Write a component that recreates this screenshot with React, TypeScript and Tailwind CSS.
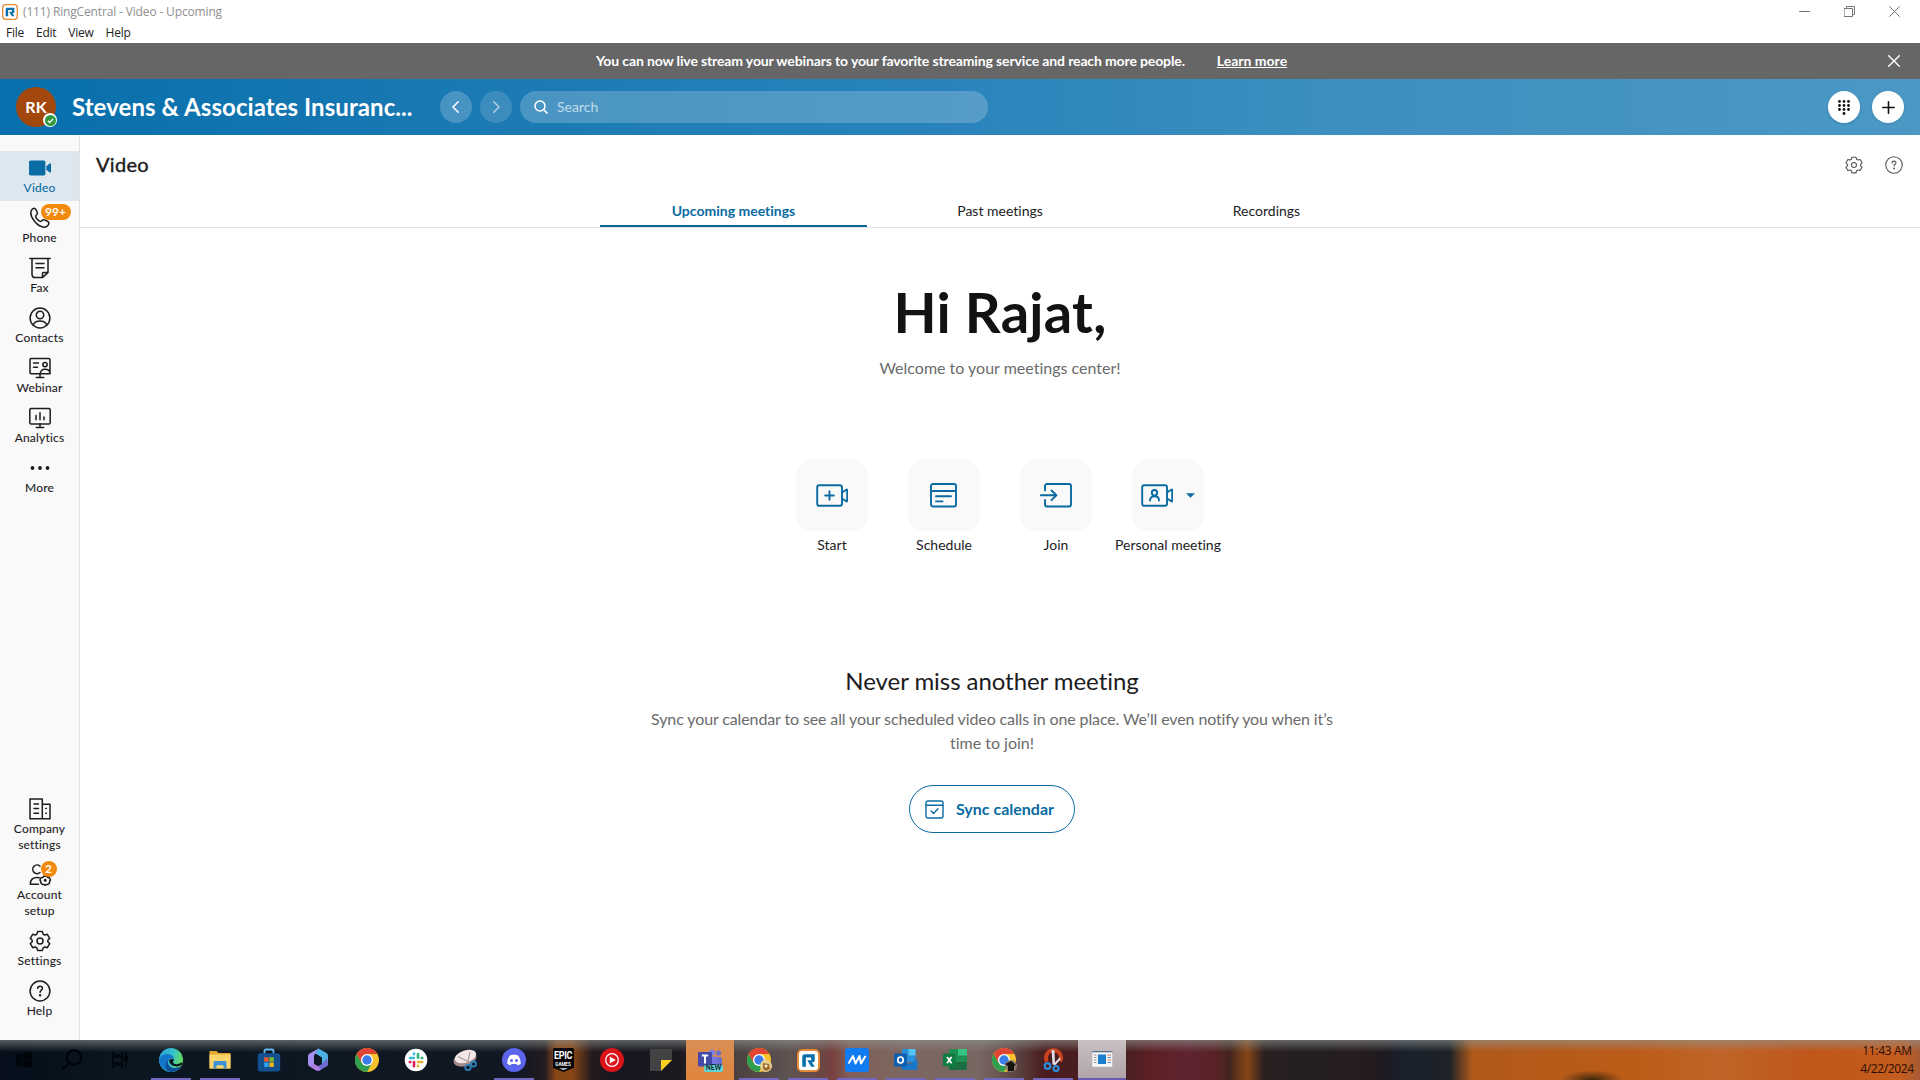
import React from 'react';

type SvgProps = { className?: string; children: React.ReactNode; box?: string; w?: number };

function Line({ className = 'size-6', children, box = '0 0 24 24', w = 1.5 }: SvgProps) {
  return (
    <svg viewBox={box} className={className} fill="none" stroke="currentColor" strokeWidth={w} strokeLinecap="round" strokeLinejoin="round">
      {children}
    </svg>
  );
}

const gearPath =
  'M9.6 2.6h4.8l.7 2.5 1.6.9 2.6-.7 2.4 4.1-1.9 1.8v1.6l1.9 1.8-2.4 4.1-2.6-.7-1.6.9-.7 2.5H9.6l-.7-2.5-1.6-.9-2.6.7-2.4-4.1 1.9-1.8v-1.6L2.3 9.4l2.4-4.1 2.6.7 1.6-.9z';

function Gear({ className = 'size-6', w = 1.5 }: { className?: string; w?: number }) {
  return (
    <Line className={className} w={w}>
      <path d={gearPath} />
      <circle cx="12" cy="12" r="3" />
    </Line>
  );
}

function Help({ className = 'size-6', w = 1.5 }: { className?: string; w?: number }) {
  return (
    <Line className={className} w={w}>
      <circle cx="12" cy="12" r="9.9" />
      <path d="M9.7 9.6c0-1.4 1-2.3 2.4-2.3s2.3.9 2.3 2.1c0 1.6-2.3 1.9-2.3 3.9" />
      <circle cx="12.1" cy="16.2" r=".5" fill="currentColor" />
    </Line>
  );
}

const VideoIcon = (
  <svg viewBox="0 0 24 24" className="size-6" fill="currentColor">
    <rect x="1" y="4.4" width="16.4" height="15" rx="1.6" />
    <path d="M18.3 10.2l3.4-2.7c.7-.5 1.3-.2 1.3.6v7.7c0 .8-.6 1.1-1.3.6l-3.4-2.7z" />
  </svg>
);

const PhoneIcon = (
  <Line>
    <path d="M3 5.2c.5-1.6 2.2-3.2 3.5-3 .9.1 1.3 1 1.8 2l1 2.3c.4 1 .1 1.7-.9 2.5-.9.8-1 1.3-.5 2.3.8 1.6 2 2.9 3.7 3.9.9.5 1.4.4 2.2-.5.8-1 1.6-1.2 2.6-.8l2.6 1.1c1.2.5 1.9 1 1.9 2 0 1.9-2 4.2-4.3 4.2C9.6 21.2 1.6 11.3 3 5.2z" />
  </Line>
);

const FaxIcon = (
  <Line>
    <path d="M1.8 2.4h20.4M4 2.4v15.8c0 2 .8 3.4 2.7 3.4h7.8l5.5-5.2v-14M14.5 21.6v-4.1c0-.7.4-1.1 1.1-1.1H20M8 7.4h8M8 11.8h8" />
  </Line>
);

const ContactsIcon = (
  <Line>
    <circle cx="12" cy="12" r="9.9" />
    <circle cx="12" cy="9" r="3.7" />
    <path d="M5.2 18.8c1.1-2.6 3.7-3.9 6.8-3.9s5.7 1.3 6.8 3.9" />
  </Line>
);

const WebinarIcon = (
  <Line>
    <path d="M11.5 17.8H3.2c-.8 0-1.2-.5-1.2-1.2V3.8c0-.8.4-1.2 1.2-1.2h17.6c.8 0 1.2.4 1.2 1.2v14H12.3c0-2.7 1.7-4.5 4.7-4.5 2.8 0 4.7 1.5 4.9 3.6M5.5 7h5M5.5 11.2h4M12 17.8v3.7M8.3 21.5h7.4" />
    <circle cx="17" cy="8.6" r="2.2" />
  </Line>
);

const AnalyticsIcon = (
  <Line>
    <rect x="1.8" y="2.6" width="20.4" height="15.4" rx="1.3" />
    <path d="M8 9.5v4.2M12 6.8v6.9M16 11v2.7M12 18v3.5M8.3 21.5h7.4" />
  </Line>
);

const MoreIcon = (
  <svg viewBox="0 0 24 24" className="size-6" fill="currentColor">
    <circle cx="4.5" cy="12" r="1.9" />
    <circle cx="12" cy="12" r="1.9" />
    <circle cx="19.5" cy="12" r="1.9" />
  </svg>
);

const CompanyIcon = (
  <Line>
    <path d="M2 21.8V2h12.3v19.8zM14.3 7.3H22v14.5h-7.7M6 7h4.5M6 11.6h4.5M6 16.2h4.5M17.8 11.6h.6M17.8 16.2h.6" />
  </Line>
);

const AccountIcon = (
  <Line>
    <path d="M12 9.5A4.3 4.3 0 1 1 12 3.2M2.3 21.2c-.1-4.5 2.6-6.7 6.5-6.7 1 0 1.7.1 2.4.3M2.3 21.2h8.2" />
    <path d="M15.7 13.2h3.2l.9 1.3 1.7.3 1 2.2-1 1.500.1 1.500-2 1.600-1.200-.2-1.200.9-1.200-.9-1.300.2-1.900-1.600.1-1.500-1-1.500 1-2.200 1.700-.3z" />
    <circle cx="17.2" cy="17.2" r=".8" />
  </Line>
);

type NavProps = { icon: React.ReactNode; label: string; active?: boolean; badge?: string; two?: boolean };

function NavItem({ icon, label, active, badge, two }: NavProps) {
  return (
    <div className={`flex w-full flex-col items-center pt-[5px] ${two ? 'h-[66px]' : 'h-[50px]'} ${active ? 'bg-[#dce7f0] text-[#0a6ca4]' : 'text-[#1c1c1e]'}`}>
      <div className="relative">
        {icon}
        {badge && (
          <span className={`absolute -top-[2px] flex h-4 items-center justify-center rounded-full bg-[#f18a0c] text-[12px] font-bold text-white ${badge.length > 1 ? 'left-[13px] w-[30px]' : 'left-[13px] w-4'}`}>
            {badge}
          </span>
        )}
      </div>
      <span className="w-[66px] text-center text-[12px] leading-4 tracking-[0.2px] [-webkit-text-stroke:0.1px]">{label}</span>
    </div>
  );
}

function RingLogo({ className }: { className: string }) {
  return (
    <svg viewBox="0 0 24 24" className={className}>
      <rect x="1" y="1" width="22" height="22" rx="4.5" fill="#fff" stroke="#e58a35" strokeWidth="2" />
      <path d="M5.5 18.5V8.2c0-1.7 1-2.7 2.7-2.7h10.3v6.3c0 1.3-.7 2-2 2h-1l3.2 4.7h-4l-4-6.8h4.1V8.9H9.3v9.6z" fill="#0b6fa8" />
    </svg>
  );
}

function Chrome() {
  return (
    <svg viewBox="0 0 24 24" className="size-6">
      <circle cx="12" cy="12" r="12" fill="#f8c32a" />
      <path d="M1.6 6A12 12 0 0 0 12 24l5.2-9L12 12 6.8 15z" fill="#2f9e4f" />
      <path d="M12 6h10.4A12 12 0 0 0 1.6 6l5.2 9z" fill="#e04434" />
      <circle cx="12" cy="12" r="6" fill="#fff" />
      <circle cx="12" cy="12" r="4.7" fill="#3b7de8" />
    </svg>
  );
}

function ChromeProfile({ dark }: { dark?: boolean }) {
  return (
    <div className="relative">
      <Chrome />
      <svg viewBox="0 0 12 12" className="absolute -right-px bottom-0 size-3">
        {dark ? (
          <>
            <circle cx="6" cy="6" r="6" fill="#8b7a6a" />
            <path d="M0 4l6-3 5 4-2 1v5H3V6z" fill="#16130f" />
          </>
        ) : (
          <>
            <circle cx="6" cy="6" r="6" fill="#e6cf8d" />
            <path d="M3 3l6 1 1 5-4 2-3-2z" fill="#9b6a2c" />
            <circle cx="6" cy="6" r="1.5" fill="#fff5d8" />
          </>
        )}
      </svg>
    </div>
  );
}

const Edge = (
  <svg viewBox="0 0 24 24" className="size-6">
    <defs>
      <linearGradient id="edgeTop" x1="0" y1="0" x2="1" y2=".3">
        <stop offset="0" stopColor="#2a9fe0" />
        <stop offset=".6" stopColor="#35c3c9" />
        <stop offset="1" stopColor="#62d966" />
      </linearGradient>
    </defs>
    <circle cx="12" cy="12" r="12" fill="url(#edgeTop)" />
    <path d="M.1 12.5C.5 8 5 5.5 9 6c3.5.3 6 2.5 6 5.5-1-1.5-4-2-5.5.5-2 3.5 1.5 8.5 6.5 8 2.5-.2 4.5-1 6.3-2.3A12 12 0 0 1 .1 12.5z" fill="#1476c8" />
    <path d="M9.5 12c-2 3.5 1.5 8.5 6.5 8 2.5-.2 4.5-1 6.3-2.3A12 12 0 0 1 11 24c-5-2-6-9-1.5-12z" fill="#0e4f9c" />
    <path d="M15 11.5c0 1.5-1.5 2-1 3 1 2.3 6.5 2.2 8.5-.5l1 1.500-1.200 1.800c-5 2.500-10.800.5-12-3.300C9.500 12 12 9.500 15 11.500z" fill="#0d1722" />
  </svg>
);

const Explorer = (
  <svg viewBox="0 0 24 24" className="size-6">
    <path d="M1.5 3h7l2 2h12v15.5h-21z" fill="#e3a82b" />
    <path d="M1.5 6.5h21v14h-21z" fill="#fbd56b" />
    <path d="M5.5 20.5v-6c0-1 .5-1.5 1.5-1.5h10c1 0 1.5.5 1.5 1.5v6h-3v-3.2H8.5v3.2z" fill="#3c92d6" />
  </svg>
);

const Store = (
  <svg viewBox="0 0 24 24" className="size-6">
    <path d="M7.5 5.5V3c0-1 .6-1.5 1.5-1.5h6c.9 0 1.5.5 1.5 1.5v2.5" fill="none" stroke="#62b8ee" strokeWidth="1.8" />
    <rect x=".8" y="5.2" width="22.4" height="18.3" rx="2.5" fill="#12508f" />
    <rect x="7.2" y="9.3" width="4.4" height="4.4" fill="#f1592b" />
    <rect x="12.4" y="9.3" width="4.4" height="4.4" fill="#7fba2a" />
    <rect x="7.2" y="14.5" width="4.4" height="4.4" fill="#2ba8ec" />
    <rect x="12.4" y="14.5" width="4.4" height="4.4" fill="#fcb916" />
  </svg>
);

const Office = (
  <svg viewBox="0 0 24 24" className="size-6">
    <path d="M12.5.5L4 5.300C2.600 6 2 7 2 8.500v7c0 1.500.8 2.500 2 3.200l2.500-1c1-.6 1.500-1.500 1.500-2.700V8.500c0-1.500.6-2.500 2-3.300z" fill="#a58ff0" />
    <path d="M12.500.5l7.500 4.300c1.400.7 2 1.700 2 3.200v7.500c0 1.500-.8 2.500-2 3.200l-4-2.200V9.500L9.500 5.500z" fill="#4fb0e4" />
    <path d="M22 15.500c0 1.500-.8 2.500-2 3.200l-6 3.500c-1.400.8-2.800.8-4 0l-6-3.500 4-2.700 4 2.200 4-2.200 5-6z" fill="#6f6ad2" />
    <path d="M4 18.700l4-2.700 4 2.200 3 3.500-1 .5c-1.400.8-2.800.8-4 0z" fill="#b07ce0" />
  </svg>
);

const Slack = (
  <svg viewBox="0 0 24 24" className="size-6">
    <circle cx="12" cy="12" r="11.3" fill="#fff" />
    <g strokeWidth="2.6" strokeLinecap="round" fill="none">
      <path d="M10 5.5v.6M6 10h3.8" stroke="#36b9e3" />
      <path d="M14 6v3.8M18.3 10h-.6" stroke="#2fb37c" />
      <path d="M14 14h4.2M14 18.2v-.5" stroke="#ecb22e" />
      <path d="M10 14v4.2M5.8 14h.6" stroke="#df1f5a" />
    </g>
  </svg>
);

const Snip = (
  <svg viewBox="0 0 24 24" className="size-6">
    <ellipse cx="12" cy="11" rx="11.8" ry="7" fill="#a58a88" transform="rotate(-18 12 11)" />
    <ellipse cx="12.5" cy="8.5" rx="11" ry="6" fill="#f3e6e6" transform="rotate(-18 12.5 8.5)" />
    <path d="M5 8.5l12 6M17 4l-2 10" stroke="#a39a9c" strokeWidth="1.2" />
    <circle cx="15" cy="19.5" r="2.7" fill="none" stroke="#2d80b8" strokeWidth="1.8" />
    <circle cx="20.5" cy="16" r="2.5" fill="none" stroke="#2d80b8" strokeWidth="1.8" />
  </svg>
);

const Discord = (
  <svg viewBox="0 0 24 24" className="size-6">
    <circle cx="12" cy="12" r="12" fill="#5b64ea" />
    <path d="M8.5 7.2c2.3-.5 4.7-.5 7 0 1.7 1 3.2 4.5 3.3 8.3-1 1-2.3 1.5-3.5 1.7l-.9-1.4c-1.6.4-3.2.4-4.800 0l-.9 1.400c-1.200-.2-2.500-.7-3.500-1.700.1-3.800 1.600-7.300 3.300-8.300z" fill="#fff" />
    <circle cx="9.5" cy="12.5" r="1.5" fill="#5b64ea" />
    <circle cx="14.5" cy="12.5" r="1.5" fill="#5b64ea" />
  </svg>
);

const Epic = (
  <div className="relative flex h-6 w-[21px] flex-col items-center">
    <svg viewBox="0 0 21 24" className="absolute inset-0 h-6 w-[21px]">
      <path d="M1.500 0h18c.9 0 1.500.6 1.500 1.500v18.200L10.500 24 0 19.700V1.500C0 .6.600 0 1.500 0z" fill="#060608" />
      <path d="M6 20.2h9l-4.500 1.800z" fill="#e9e9e9" />
    </svg>
    <span className="relative mt-px origin-top scale-y-[1.3] font-['Roboto',sans-serif] text-[9px] leading-[10px] font-bold tracking-[-0.3px] text-white">EPIC</span>
    <span className="relative mt-[3px] font-['Roboto',sans-serif] text-[4.5px] leading-[5px] font-bold text-white">GAMES</span>
  </div>
);

const Music = (
  <svg viewBox="0 0 24 24" className="size-6">
    <circle cx="12" cy="12" r="12" fill="#d9141a" />
    <circle cx="12" cy="12" r="6.3" fill="none" stroke="#fff" strokeWidth="1.2" />
    <path d="M9.8 8.4l6 3.6-6 3.6z" fill="#fff" />
  </svg>
);

const Sticky = (
  <svg viewBox="0 0 24 24" className="size-6">
    <path d="M1 1h22v11L12 23H1z" fill="#434242" />
    <path d="M12 12h11L12 23z" fill="#fbd21f" />
  </svg>
);

const Teams = (
  <div className="relative h-6 w-6">
    <svg viewBox="0 0 24 24" className="size-6">
      <circle cx="20.5" cy="5" r="2.6" fill="#6a6fd0" />
      <rect x="15" y="9" width="9" height="10" rx="2" fill="#6a6fd0" />
      <circle cx="14" cy="4.500" r="3" fill="#7c82e6" />
      <rect x="8" y="8.5" width="11" height="13" rx="2" fill="#7278dd" />
      <rect x="0" y="4" width="14" height="14.500" rx="1.2" fill="#4448a8" />
      <path d="M3.800 7.500h6.400M7 7.500v8" stroke="#fff" strokeWidth="2" />
    </svg>
    <span className="absolute top-[17px] left-[6px] flex h-[7px] w-[19px] items-center justify-center rounded-[2px] bg-[#5fd6d6] text-[6.5px] leading-none font-black text-[#0d2a33]">NEW</span>
  </div>
);

const RingTask = <RingLogo className="size-[23px]" />;

const Wave = (
  <svg viewBox="0 0 24 24" className="size-6">
    <rect width="24" height="24" rx="3" fill="#117cf2" />
    <path d="M3.500 15.500L8 8l2.500 7.500L14.500 8l1.500 7.500 4.500-7.500" fill="none" stroke="#fff" strokeWidth="2" strokeLinejoin="round" />
  </svg>
);

const Outlook = (
  <svg viewBox="0 0 24 24" className="size-6">
    <rect x="8" y="1" width="13.5" height="13" rx="1" fill="#2a8fdc" />
    <rect x="14.5" y="1" width="7" height="6.5" fill="#55c3f3" />
    <path d="M6.500 11l8.500 5 8.500-5v9.500c0 1-.5 1.500-1.500 1.500H8z" fill="#1876c9" />
    <rect x="0" y="5.5" width="13" height="13" rx="1.2" fill="#0f5fae" />
    <ellipse cx="6.500" cy="12" rx="2.7" ry="3" fill="none" stroke="#fff" strokeWidth="1.7" />
  </svg>
);

const Excel = (
  <svg viewBox="0 0 24 24" className="size-6">
    <rect x="6" y="1" width="18" height="21" rx="1.3" fill="#1f8f54" />
    <path d="M15 1h9v6.500h-9z" fill="#38c482" />
    <path d="M6 14h18v7c0 .7-.5 1-1.200 1H7c-.7 0-1-.3-1-1z" fill="#1a6e41" />
    <rect x="0" y="5.5" width="12.5" height="13" rx="1.2" fill="#107c41" />
    <path d="M4 9l4.600 6.200M8.600 9L4 15.200" stroke="#fff" strokeWidth="1.8" />
  </svg>
);

const Scissors = (
  <svg viewBox="0 0 24 24" className="size-6">
    <path d="M6 13.500a7.500 7.500 0 1 1 13 0" fill="none" stroke="#c9431f" strokeWidth="4" />
    <path d="M10.500 1.500l3 1 .5 14.500-2.500-.5zM12.500 16l6.500-7 .5 2.500-5.500 6z" fill="#dfe1e6" />
    <circle cx="6.500" cy="18" r="2.800" fill="none" stroke="#2d8bd8" strokeWidth="2.200" />
    <circle cx="15" cy="20.500" r="2.500" fill="none" stroke="#2d8bd8" strokeWidth="2.200" />
  </svg>
);

const WindowApp = (
  <svg viewBox="0 0 24 24" className="size-6">
    <rect x="2" y="4.5" width="20.5" height="15.5" fill="#f6f6f6" stroke="#b5b0b0" strokeWidth=".5" />
    <rect x="2" y="4" width="20.5" height="1.3" fill="#57708c" />
    <rect x="8" y="7.5" width="8" height="9.5" fill="#1b7fd0" />
    <path d="M4 8h2.500M4 10.500h2.500M4 13h2.500M4 15.500h2.500" stroke="#888" strokeWidth=".9" />
    <path d="M17.500 8h3.500M17.500 13h3.500" stroke="#cc6a3c" strokeWidth=".9" />
    <path d="M17.500 10.500h3.500M17.500 15.500h3.500" stroke="#3c86cc" strokeWidth=".9" />
  </svg>
);

const tasks: { icon: React.ReactNode; open?: boolean; cell?: string }[] = [
  { icon: Edge, open: true },
  { icon: Explorer, open: true },
  { icon: Store },
  { icon: Office },
  { icon: <Chrome /> },
  { icon: Slack },
  { icon: Snip },
  { icon: Discord, open: true },
  { icon: Epic },
  { icon: Music },
  { icon: Sticky },
  { icon: Teams, cell: 'bg-linear-to-b from-[#d98e54] to-[#e0863c]' },
  { icon: <ChromeProfile />, open: true },
  { icon: RingTask, open: true },
  { icon: Wave, open: true },
  { icon: Outlook, open: true },
  { icon: Excel, open: true },
  { icon: <ChromeProfile dark />, open: true },
  { icon: Scissors, open: true },
  { icon: WindowApp, cell: 'bg-linear-to-b from-[#c9c1c3] to-[#b0a4a8] border-b-2 border-[#6a5cb5]' },
];

function Taskbar() {
  return (
    <footer className="relative flex h-10 shrink-0 bg-[linear-gradient(90deg,#050e1a_0px,#0a1620_120px,#0d1722_300px,#111824_520px,#241b20_545px,#8a4716_556px,#8a4716_572px,#241a1e_592px,#15161f_620px,#1c1a20_680px,#4a4140_735px,#5f5350_790px,#6a4844_820px,#77403e_832px,#806058_850px,#7d665f_900px,#786662_980px,#5c4644_1015px,#4a1c1e_1045px,#4a2022_1127px,#5c2024_1150px,#5e2430_1190px,#5a2226_1215px,#43261d_1230px,#864617_1247px,#2c2020_1264px,#221e22_1300px,#261c1e_1360px,#1e1a20_1385px,#18202c_1400px,#1e2228_1450px,#b0591a_1472px,#bd5c18_1640px,#bf6428_1720px,#c0561a_1810px,#c45c1e_1900px,#a85a34_1920px)]">
      <div className="absolute inset-x-0 top-0 h-3 bg-linear-to-b from-[#8f9490]/60 to-transparent" />
      <div className="absolute bottom-0 left-[1560px] h-2.5 w-16 bg-[radial-gradient(ellipse_at_50%_100%,#3a260c_0%,transparent_70%)]" />
      <div className="relative flex w-[147px]">
        <div className="flex w-12 items-center justify-center">
          <svg viewBox="0 0 16 16" className="size-4" fill="#000509">
            <path d="M0 2.200l6.500-.9v6.200H0zM7.300 1.200L16 0v7.500H7.300zM0 8.300h6.500v6.300L0 13.700zM7.300 8.300H16V16l-8.700-1.200z" />
          </svg>
        </div>
        <div className="flex w-12 items-center justify-center">
          <svg viewBox="0 0 22 22" className="size-[22px]" fill="none" stroke="#000307" strokeWidth="2.2">
            <circle cx="13" cy="8.5" r="7.2" />
            <path d="M8 14L1.500 20.500" />
          </svg>
        </div>
        <div className="flex w-12 items-center justify-center">
          <svg viewBox="0 0 16 16" className="size-4" fill="none" stroke="#00050a" strokeWidth="1.3">
            <path d="M.7 0v3h9.600V0M.7 16v-3h9.600v3M.7 5h9.600v6H.7zM14 0v16" />
            <path d="M12.800 4.500h2.400v3h-2.400z" fill="#00050a" />
          </svg>
        </div>
      </div>
      <div className="relative flex gap-px">
        {tasks.map((t, i) => (
          <div key={i} className={`relative flex h-10 w-12 items-center justify-center ${t.cell ?? ''}`}>
            {t.icon}
            {t.open && <span className="absolute bottom-0 left-1 h-0.5 w-10 bg-[#7268c2]" />}
          </div>
        ))}
      </div>
      <div className="relative ml-auto flex w-[66px] flex-col items-center pt-0.5 font-['Open_Sans',sans-serif] text-[12px] leading-[18px] tracking-[-0.35px] text-[#2b0f04]">
        <span>11:43 AM</span>
        <span>4/22/2024</span>
      </div>
    </footer>
  );
}

const ink = 'text-[#096ba2]';

const videoFrame = (
  <>
    <rect x="1.2" y="2.2" width="24.8" height="20.6" rx="2" />
    <path d="M26 9.500l4.300-2.800c.5-.3.900-.1.900.5v10.600c0 .6-.4.800-.9.500L26 15.500" />
  </>
);

const actions: { label: string; icon: React.ReactNode; menu?: boolean }[] = [
  {
    label: 'Start',
    icon: (
      <Line className="h-[25px] w-8" box="0 0 32 25" w={1.9}>
        {videoFrame}
        <path d="M13.500 8.200v8.600M9.200 12.500h8.600" />
      </Line>
    ),
  },
  {
    label: 'Schedule',
    icon: (
      <Line className="mr-px h-[25px] w-[27px]" box="0 0 27 25" w={1.9}>
        <rect x="1" y="1" width="25" height="22.5" rx="2" />
        <path d="M1 8h25M6 13.300h15M6 18.400h6.500" />
      </Line>
    ),
  },
  {
    label: 'Join',
    icon: (
      <Line className="h-[25px] w-8" box="0 0 32 25" w={1.9}>
        <path d="M5 7.500V3c0-1.200.8-2 2-2h22c1.200 0 2 .8 2 2v18.500c0 1.200-.8 2-2 2H7c-1.200 0-2-.8-2-2V17M.9 12.300h15.400M11.500 7.500l4.900 4.800-4.900 4.800" />
      </Line>
    ),
  },
  {
    label: 'Personal meeting',
    menu: true,
    icon: (
      <Line className="h-[25px] w-8" box="0 0 32 25" w={1.9}>
        {videoFrame}
        <circle cx="13.500" cy="9.700" r="2.700" />
        <path d="M9 17.500c0-2.700 1.700-4.200 4.500-4.200s4.500 1.500 4.500 4.200" />
      </Line>
    ),
  },
];

export default function App() {
  return (
    <div className="flex h-[1080px] w-[1920px] flex-col overflow-hidden bg-white font-['Lato',sans-serif] text-[#1c1c1e] [font-variant-ligatures:none]">
      <div className="flex h-[23px] shrink-0 items-center pl-[2px] font-['Open_Sans',sans-serif]">
        <RingLogo className="size-4" />
        <span className="ml-[5px] text-[12px] tracking-[-0.15px] text-[#8f8f8f]">(111) RingCentral - Video - Upcoming</span>
        <div className="ml-auto flex items-center gap-[34px] pr-5 text-[#777]">
          <Line className="size-[11px]" box="0 0 11 11" w={1}><path d="M.5 5.500h10" /></Line>
          <Line className="size-[11px]" box="0 0 11 11" w={1}><path d="M.5 2.500h8v8h-8zM2.500 2.500v-2h8v8h-2" /></Line>
          <Line className="size-[11px]" box="0 0 11 11" w={1}><path d="M.5 .5l10 10M10.500 .5l-10 10" /></Line>
        </div>
      </div>
      <div className="flex h-5 shrink-0 items-center gap-3 pl-1.5 font-['Open_Sans',sans-serif] text-[12px] tracking-[-0.25px] text-[#222]">
        <span>File</span>
        <span>Edit</span>
        <span>View</span>
        <span>Help</span>
      </div>
      <div className="flex h-9 shrink-0 items-center bg-[#666] pr-5 text-[14px] font-bold text-white">
        <span className="mb-0.5 ml-[596px] tracking-[-0.13px]">You can now live stream your webinars to your favorite streaming service and reach more people.</span>
        <span className="mb-0.5 ml-8 underline">Learn more</span>
        <Line className="ml-auto size-3" box="0 0 12 12" w={1.4}><path d="M.7 .7l10.600 10.600M11.300 .7L.7 11.300" /></Line>
      </div>
      <header className="flex h-14 shrink-0 items-center bg-[linear-gradient(90deg,#066fac_0px,#1b7ab3_500px,#2a84bb_950px,#3d8fc0_1350px,#4b98c5_1920px)] pr-4">
        <div className="relative ml-4 flex size-10 items-center justify-center rounded-full bg-[#a3480d] text-[16px] font-bold text-white">
          RK
          <span className="absolute top-[26px] left-[27px] flex size-[14px] items-center justify-center rounded-full bg-white">
            <svg viewBox="0 0 12 12" className="size-[11px]">
              <circle cx="6" cy="6" r="6" fill="#2f9a3f" />
              <path d="M3.200 6.200l2 2 3.600-4" fill="none" stroke="#fff" strokeWidth="1.5" />
            </svg>
          </span>
        </div>
        <div className="ml-4 w-[368px] text-[24px] font-bold tracking-[0.07px] whitespace-nowrap text-white">Stevens &amp; Associates Insuranc...</div>
        <div className="flex size-8 items-center justify-center rounded-full bg-white/20 text-white">
          <Line className="mr-px h-3 w-[7px]" box="0 0 7 12" w={1.5}><path d="M6.200 .8L1 6l5.200 5.200" /></Line>
        </div>
        <div className="ml-2 flex size-8 items-center justify-center rounded-full bg-white/15 text-white/60">
          <Line className="h-3 w-[7px]" box="0 0 7 12" w={1.5}><path d="M.8 .8L6 6 .8 11.200" /></Line>
        </div>
        <div className="ml-2 flex h-8 w-[468px] items-center rounded-full bg-white/20 pl-3.5 text-white">
          <Line className="size-[14px]" box="0 0 14 14" w={1.5}>
            <circle cx="6" cy="6" r="5" />
            <path d="M9.800 9.800l3.300 3.300" />
          </Line>
          <span className="mb-0.5 ml-[9px] text-[14px] text-white/65">Search</span>
        </div>
        <div className="ml-auto flex gap-3 text-[#111]">
          <div className="flex size-8 items-center justify-center rounded-full bg-white shadow">
            <svg viewBox="0 0 12 15" className="h-[15px] w-3" fill="currentColor">
              {[1.5, 5.5, 9.5].map((y) => [1.5, 6, 10.5].map((x) => <circle key={`${x}-${y}`} cx={x} cy={y} r="1.4" />))}
              <circle cx="6" cy="13.5" r="1.4" />
            </svg>
          </div>
          <div className="flex size-8 items-center justify-center rounded-full bg-white shadow">
            <Line className="size-[13px]" box="0 0 13 13" w={1.6}><path d="M6.500 .8v11.400M.8 6.500h11.400" /></Line>
          </div>
        </div>
      </header>
      <div className="flex min-h-0 flex-1">
        <nav className="flex w-20 shrink-0 flex-col border-r border-[#e2e2e2] bg-[#f9f9f9] py-4">
          <NavItem icon={VideoIcon} label="Video" active />
          <NavItem icon={PhoneIcon} label="Phone" badge="99+" />
          <NavItem icon={FaxIcon} label="Fax" />
          <NavItem icon={ContactsIcon} label="Contacts" />
          <NavItem icon={WebinarIcon} label="Webinar" />
          <NavItem icon={AnalyticsIcon} label="Analytics" />
          <NavItem icon={MoreIcon} label="More" />
          <div className="mt-auto">
            <NavItem icon={CompanyIcon} label="Company settings" two />
            <NavItem icon={AccountIcon} label="Account setup" badge="2" two />
            <NavItem icon={<Gear />} label="Settings" />
            <NavItem icon={<Help />} label="Help" />
          </div>
        </nav>
        <main className="flex min-w-0 flex-1 flex-col">
          <div className="flex h-[60px] shrink-0 items-center pr-4 pl-4">
            <h1 className="mb-0.5 text-[20px] tracking-[0.3px] [-webkit-text-stroke:0.4px]">Video</h1>
            <div className="ml-auto flex gap-5 text-[#555]">
              <Gear className="size-5" w={1.3} />
              <Help className="size-5" w={1.3} />
            </div>
          </div>
          <div className="flex h-[33px] shrink-0 justify-center border-b border-[#e2e2e2] text-[14px]">
            <div className={`flex w-[267px] items-center justify-center border-b-2 border-[#0b6899] font-bold ${ink}`}>Upcoming meetings</div>
            <div className="flex w-[266px] items-center justify-center pb-0.5">Past meetings</div>
            <div className="flex w-[267px] items-center justify-center pb-0.5">Recordings</div>
          </div>
          <section className="flex flex-col items-center">
            <h2 className="mt-[50px] text-[56px] leading-[68px] font-bold tracking-[0.25px] text-[#121212]">Hi Rajat,</h2>
            <p className="mt-2.5 text-[16px] leading-6 text-[#6b6b6b]">Welcome to your meetings center!</p>
            <div className="mt-[79px] flex gap-10">
              {actions.map((a) => (
                <div key={a.label} className="flex w-[72px] flex-col items-center">
                  <div className={`flex size-[72px] items-center rounded-2xl bg-[#f9f9f9] ${ink} ${a.menu ? 'pl-[9px]' : 'justify-center'}`}>
                    {a.icon}
                    {a.menu && (
                      <svg viewBox="0 0 10 5" className="ml-[13px] h-[5px] w-[9px]" fill="currentColor">
                        <path d="M0 0h10L5 5z" />
                      </svg>
                    )}
                  </div>
                  <span className="mt-1 text-[14px] leading-5 whitespace-nowrap">{a.label}</span>
                </div>
              ))}
            </div>
          </section>
          <section className="mt-[110px] mr-4 flex flex-col items-center">
            <h3 className="text-[24px] leading-8 tracking-[-0.06px]">Never miss another meeting</h3>
            <p className="mt-[10px] w-[700px] text-center text-[16px] leading-6 tracking-[-0.12px] text-[#6b6b6b]">
              Sync your calendar to see all your scheduled video calls in one place. We’ll even notify you when it’s{' '}
              <span className="tracking-normal">time to join!</span>
            </p>
            <button className={`mt-[30px] flex h-12 w-[166px] items-center rounded-full border border-[#096ba2] pl-[15px] text-[16px] font-bold ${ink}`}>
              <Line className="size-[19px]" box="0 0 19 19" w={1.4}>
                <rect x="1" y="1" width="17" height="17" rx="2" />
                <path d="M1 5.300h17M6 11l2.500 2.500L13 8.800" />
              </Line>
              <span className="ml-3 whitespace-nowrap">Sync calendar</span>
            </button>
          </section>
        </main>
      </div>
      <Taskbar />
    </div>
  );
}
